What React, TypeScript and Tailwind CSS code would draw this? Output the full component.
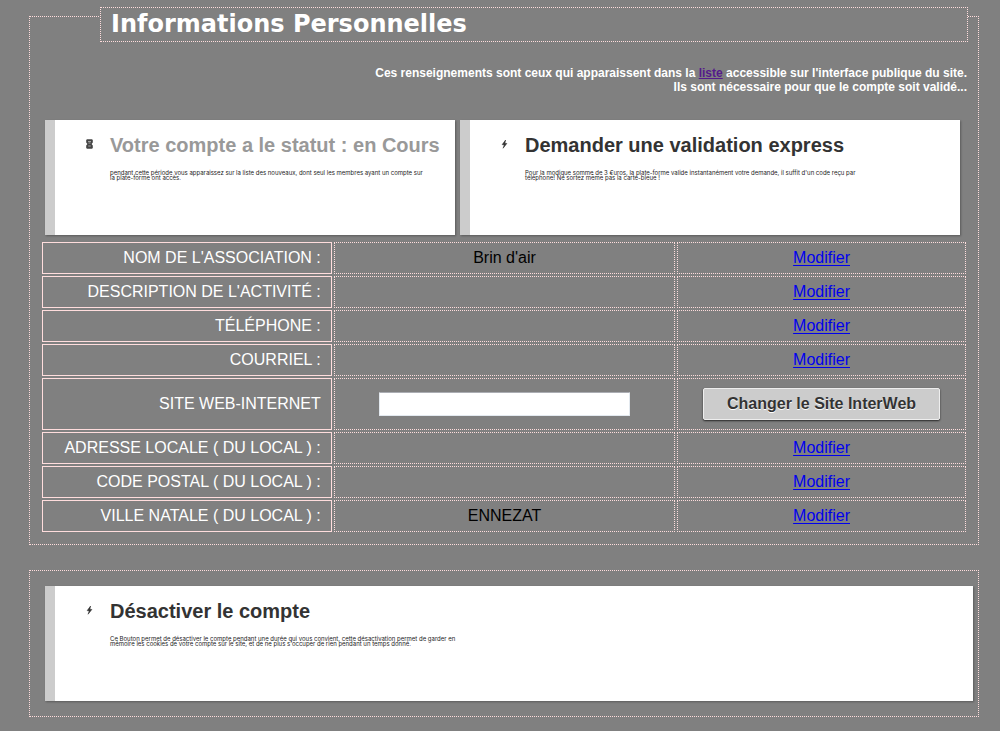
import type { ReactNode } from "react";

function Hourglass() {
  return (
    <svg viewBox="0 0 7 10" className="h-[10px] w-[7px]" aria-hidden="true">
      <path d="M1 0.2h5l.8.8v2.4L5.6 5l1.2 1.6V9l-.8.8H1L.2 9V6.6L1.4 5 .2 3.4V1z" fill="#444" />
      <path d="M2 2.5h3M2.4 4h2.2M2.2 7h2.6" stroke="#bbb" strokeWidth="0.8" />
    </svg>
  );
}

function Bolt() {
  return (
    <svg viewBox="0 0 7 10" className="h-[10px] w-[7px]" aria-hidden="true">
      <path d="M4.6 1 1.2 5.6 3.3 5.9 2.1 9.2 5.8 4.5 3.8 4.2z" fill="#333" stroke="#333" strokeWidth="0.6" />
    </svg>
  );
}

type CardProps = {
  icon: ReactNode;
  title: string;
  titleClass: string;
  className: string;
  children: ReactNode;
};

function Card({ icon, title, titleClass, className, children }: CardProps) {
  return (
    <article
      className={`flex h-[115px] min-w-0 border-l-[10px] border-[#ccc] bg-white text-[#333] shadow-[1px_1px_2px_rgba(0,0,0,0.3)] ${className}`}
    >
      <div className="flex w-[55px] shrink-0 justify-end pt-[19px] pr-[17px]">{icon}</div>
      <div className="pt-[13px]">
        <h2 className={`text-[20px] leading-[24px] font-bold whitespace-nowrap ${titleClass}`}>{title}</h2>
        <p className="pt-[13px] text-[6px] leading-[5px] whitespace-nowrap text-[#222] font-[Inter,sans-serif]">{children}</p>
      </div>
    </article>
  );
}

type Row = { label: string; value: string; editable?: boolean };

const rows: Row[] = [
  { label: "NOM DE L'ASSOCIATION :", value: "Brin d'air" },
  { label: "DESCRIPTION DE L'ACTIVITÉ :", value: "" },
  { label: "TÉLÉPHONE :", value: "" },
  { label: "COURRIEL :", value: "" },
  { label: "SITE WEB-INTERNET", value: "", editable: true },
  { label: "ADRESSE LOCALE ( DU LOCAL ) :", value: "" },
  { label: "CODE POSTAL ( DU LOCAL ) :", value: "" },
  { label: "VILLE NATALE ( DU LOCAL ) :", value: "ENNEZAT" },
];

function InfoRow({ label, value, editable }: Row) {
  const cell = "border border-dotted border-[#ffdddd] p-0 text-center align-middle";
  return (
    <tr className={editable ? "h-[52px]" : "h-[32px]"}>
      <th scope="row" className="border border-solid border-[#ffdddd] px-[10px] py-0 text-right align-middle font-normal text-white">
        {editable ? <label htmlFor="site">{label}</label> : label}
      </th>
      <td className={cell}>
        {editable ? (
          <input
            id="site"
            type="text"
            className="mx-auto block h-[24px] w-[251px] max-w-full rounded-[1px] border border-[#e3e9ef] border-t-[#abadb3] bg-white px-1 text-[13px] outline-none"
          />
        ) : (
          value
        )}
      </td>
      <td className={cell}>
        {editable ? (
          <button
            type="button"
            className="mx-auto block h-[32px] w-[237px] rounded-[2px] border border-[#eee] bg-[#ccc] text-[16px] font-bold whitespace-nowrap text-[#333] shadow-[0_1px_2px_rgba(0,0,0,0.7)] [text-shadow:0_1px_0_#fff]"
          >
            Changer le Site InterWeb
          </button>
        ) : (
          <a href="#modifier" className="text-[#0000ee] underline underline-offset-2">
            Modifier
          </a>
        )}
      </td>
    </tr>
  );
}

export default function App() {
  return (
    <main className="min-h-screen bg-[#808080] pt-[16px] pr-[21px] pb-[14px] pl-[29px] text-[16px] leading-[18px] text-black font-['Liberation_Sans',Arial,sans-serif]">
      <section className="border border-dotted border-[#ffdddd] px-[10px] pb-[10px]">
        <h1 className="relative mt-[-10px] ml-[60px] border border-dotted border-[#ffdddd] bg-[#808080] px-[10px] py-[1px] text-[24px] leading-[31px] font-bold text-white font-['DejaVu_Sans',Verdana,sans-serif]">
          Informations Personnelles
        </h1>
        <p className="mt-[24px] pr-px text-right text-[12px] leading-[14px] font-bold text-white">
          Ces renseignements sont ceux qui apparaissent dans la{" "}
          <a href="#liste" className="text-[#551a8b] underline">
            liste
          </a>{" "}
          accessible sur l'interface publique du site.
          <br />
          Ils sont nécessaire pour que le compte soit validé...
        </p>
        <div className="mt-[26px] mb-[5px] flex gap-[5px] pr-[8px] pl-[5px]">
          <Card
            className="flex-[40_1_0%]"
            icon={<Hourglass />}
            title="Votre compte a le statut : en Cours"
            titleClass="text-[#999]"
          >
            pendant cette période vous apparaissez sur la liste des nouveaux, dont seul les membres ayant un compte sur
            <br />
            la plate-forme ont accès.
          </Card>
          <Card className="flex-[49_1_0%]" icon={<Bolt />} title="Demander une validation express" titleClass="text-[#333]">
            Pour la modique somme de 3 €uros, la plate-forme valide instantanément votre demande, il suffit d'un code reçu par
            <br />
            téléphone! Ne sortez même pas la carte-bleue !
          </Card>
        </div>
        <table className="w-full table-fixed border-separate border-spacing-[2px]">
          <colgroup>
            <col className="w-[31.5%]" />
            <col className="w-[37.1%]" />
            <col className="w-[31.4%]" />
          </colgroup>
          <tbody>
            {rows.map((row) => (
              <InfoRow key={row.label} {...row} />
            ))}
          </tbody>
        </table>
      </section>
      <section className="mt-[25px] border border-dotted border-[#ffdddd] py-[15px] pr-[5px] pl-[15px]">
        <Card className="" icon={<Bolt />} title="Désactiver le compte" titleClass="text-[#333]">
          Ce Bouton permet de désactiver le compte pendant une durée qui vous convient, cette désactivation permet de garder en
          <br />
          mémoire les cookies de votre compte sur le site, et de ne plus s'occuper de rien pendant un temps donné.
        </Card>
      </section>
    </main>
  );
}
